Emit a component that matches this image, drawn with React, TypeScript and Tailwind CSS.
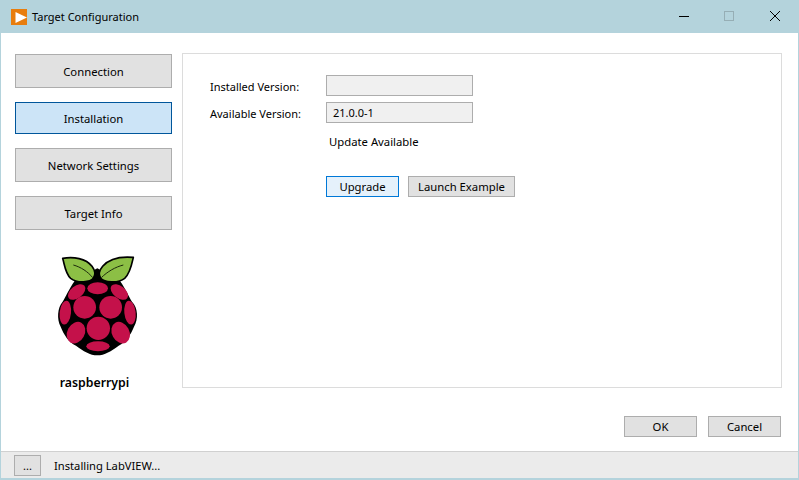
import React from 'react';

const font = "font-['Noto_Sans','Open_Sans',sans-serif]";

function RaspberryLogo() {
  return (
    <svg className="block" width="84" height="104" viewBox="48 24 252 312">
      <path
        d="M172 331 C150 331 130 318 108 302 C85 290 72 270 62 245 C50 222 52 188 68 170 C76 158 88 130 104 108 L172 70 L240 108 C256 130 268 158 276 170 C294 188 296 222 282 245 C272 270 258 290 236 302 C214 318 194 331 172 331 Z"
        fill="#000"
      />
      <path
        d="M68 40 C100 34 138 40 156 64 C165 76 168 88 160 100 C152 112 112 116 92 100 C76 86 74 60 68 40 Z"
        fill="#8cbf45"
        stroke="#000"
        strokeWidth="5"
        strokeLinejoin="round"
      />
      <path
        d="M280 37 C245 34 208 40 188 64 C178 76 174 88 182 100 C192 112 234 116 254 100 C270 86 275 60 280 37 Z"
        fill="#8cbf45"
        stroke="#000"
        strokeWidth="5"
        strokeLinejoin="round"
      />
      <path d="M100 60 C122 66 144 80 158 98" fill="none" stroke="#1c2a0c" strokeWidth="3" />
      <path d="M250 60 C226 66 202 80 184 98" fill="none" stroke="#1c2a0c" strokeWidth="3" />
      <g fill="#c4114a">
        <ellipse cx="173" cy="130" rx="31" ry="18" />
        <ellipse cx="110" cy="141" rx="30" ry="18" transform="rotate(-38 110 141)" />
        <ellipse cx="238" cy="141" rx="30" ry="18" transform="rotate(38 238 141)" />
        <circle cx="134" cy="187" r="34" />
        <circle cx="212" cy="187" r="34" />
        <circle cx="175" cy="250" r="35" />
        <ellipse cx="76" cy="203" rx="17" ry="36" transform="rotate(6 76 203)" />
        <ellipse cx="270" cy="203" rx="17" ry="36" transform="rotate(-6 270 203)" />
        <ellipse cx="108" cy="263" rx="26" ry="34" transform="rotate(28 108 263)" />
        <ellipse cx="242" cy="263" rx="26" ry="34" transform="rotate(-28 242 263)" />
        <ellipse cx="174" cy="304" rx="35" ry="15" />
      </g>
    </svg>
  );
}

function NavButton({ label, active }: { label: string; active?: boolean }) {
  return (
    <button
      className={
        active
          ? 'h-[32px] w-[157px] border border-[#00569b] bg-[#cce4f7] pt-[2px] text-[11.3px]'
          : 'h-[34px] w-[157px] border border-[#adadad] bg-[#e1e1e1] pt-px text-[11.3px]'
      }
    >
      {label}
    </button>
  );
}

function DialogButton({ label }: { label: string }) {
  return <button className="h-[21px] w-[73px] border border-[#adadad] bg-[#e1e1e1] text-[11.3px]">{label}</button>;
}

export default function App() {
  return (
    <div className={`flex h-[480px] w-[799px] flex-col overflow-hidden bg-[#b4d3dc] ${font} text-[11px] leading-[18px] text-black`}>
      <div className="flex h-[33px] shrink-0 items-center pl-[11px]">
        <svg width="16" height="16" viewBox="0 0 16 16">
          <rect width="16" height="16" fill="#e87d0d" />
          <path d="M4.5 3 L16 8.5 L4.5 14 Z" fill="#fff" />
        </svg>
        <span className="ml-[5px] flex-1">Target Configuration</span>
        <svg width="120" height="33" viewBox="0 0 120 33">
          <path d="M0 16.5 H10" stroke="#000" strokeWidth="1" />
          <rect x="45.5" y="11.5" width="9" height="9" fill="none" stroke="#96aeb5" strokeWidth="1" />
          <path d="M91 11 L101 21 M101 11 L91 21" stroke="#000" strokeWidth="1" />
        </svg>
      </div>
      <div className="mx-px flex min-h-0 flex-1 flex-col bg-white">
        <div className="flex h-[355px] shrink-0 pt-[20px] pl-[14px]">
          <div className="flex w-[167px] shrink-0 flex-col pt-px">
            <div className="flex flex-col gap-[14px]">
              <NavButton label="Connection" />
              <NavButton label="Installation" active />
              <NavButton label="Network Settings" />
              <NavButton label="Target Info" />
            </div>
            <div className="mt-[23px] ml-[41px]">
              <RaspberryLogo />
            </div>
            <div className="mt-[17px] w-[159px] text-center text-[12.3px] font-semibold">raspberrypi</div>
          </div>
          <div className="h-[335px] w-[600px] border border-[#dcdcdc] pt-[21px] pl-[27px]">
            <div className="flex h-[21px]">
              <span className="w-[116px] pt-[3px]">Installed Version:</span>
              <div className="h-[21px] w-[147px] border border-[#adadad] bg-[#f0f0f0]" />
            </div>
            <div className="mt-[6px] flex h-[21px]">
              <span className="w-[116px] pt-[3px]">Available Version:</span>
              <div className="flex h-[21px] w-[147px] items-center border border-[#adadad] bg-[#f0f0f0] pl-[6px]">21.0.0-1</div>
            </div>
            <div className="mt-[10px] pl-[119px] text-[11.3px]">Update Available</div>
            <div className="mt-[25px] flex gap-[9px] pl-[116px] text-[11.3px]">
              <button className="h-[21px] w-[73px] border border-[#0078d7] bg-[#e5f1fb]">Upgrade</button>
              <button className="h-[21px] w-[107px] border border-[#adadad] bg-[#e1e1e1]">Launch Example</button>
            </div>
          </div>
        </div>
        <div className="flex h-[63px] shrink-0 justify-end gap-[11px] pt-[28px] pr-[17px]">
          <DialogButton label="OK" />
          <DialogButton label="Cancel" />
        </div>
        <div className="flex h-[27px] shrink-0 items-start border-t border-[#d0d0d0] bg-[#ebebeb] pt-[3px] pl-[13px]">
          <button className="h-[21px] w-[27px] border border-[#adadad] bg-[#e1e1e1]">...</button>
          <span className="ml-[13px] pt-[2px] text-[11.2px]">Installing LabVIEW...</span>
        </div>
      </div>
      <div className="h-[2px] shrink-0" />
    </div>
  );
}
